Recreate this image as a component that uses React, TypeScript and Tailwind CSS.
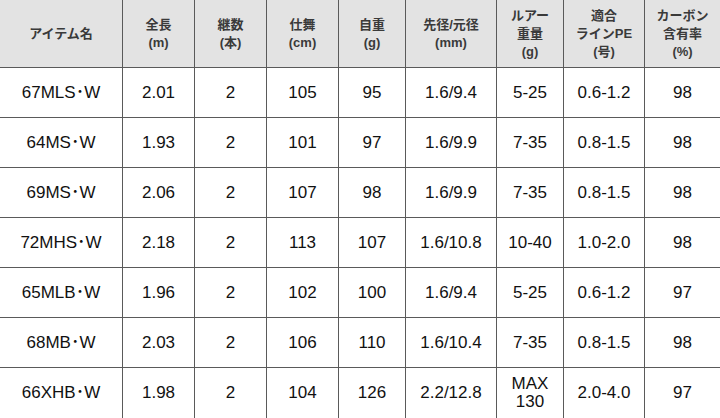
import React from 'react';

const headers: string[][] = [
  ['アイテム名'],
  ['全長', '(m)'],
  ['継数', '(本)'],
  ['仕舞', '(cm)'],
  ['自重', '(g)'],
  ['先径/元径', '(mm)'],
  ['ルアー', '重量', '(g)'],
  ['適合', 'ラインPE', '(号)'],
  ['カーボン', '含有率', '(%)'],
];

const rows: string[][] = [
  ['67MLS･W', '2.01', '2', '105', '95', '1.6/9.4', '5-25', '0.6-1.2', '98'],
  ['64MS･W', '1.93', '2', '101', '97', '1.6/9.9', '7-35', '0.8-1.5', '98'],
  ['69MS･W', '2.06', '2', '107', '98', '1.6/9.9', '7-35', '0.8-1.5', '98'],
  ['72MHS･W', '2.18', '2', '113', '107', '1.6/10.8', '10-40', '1.0-2.0', '98'],
  ['65MLB･W', '1.96', '2', '102', '100', '1.6/9.4', '5-25', '0.6-1.2', '97'],
  ['68MB･W', '2.03', '2', '106', '110', '1.6/10.4', '7-35', '0.8-1.5', '98'],
  ['66XHB･W', '1.98', '2', '104', '126', '2.2/12.8', 'MAX\n130', '2.0-4.0', '97'],
];

const font = { fontFamily: '"Liberation Sans", Arial, "Noto Sans CJK JP", sans-serif' };

export default function App() {
  return (
    <div className="w-[720px] h-[418px] overflow-hidden bg-white" style={font}>
      <div className="grid grid-cols-[123px_72px_72px_72px_67px_91px_67px_81px_75px]">
        {headers.map((lines, i) => (
          <div
            key={i}
            className={`h-[68px] flex flex-col items-center justify-center bg-[#e3e3e3] border-b border-[#5a5a5a] text-[13px] leading-[18px] font-bold text-[#3a3a3a] ${
              i < 8 ? 'border-r' : ''
            }`}
          >
            {lines.map((l) => (
              <span key={l}>{l}</span>
            ))}
          </div>
        ))}
        {rows.map((row, r) =>
          row.map((cell, i) => (
            <div
              key={`${r}-${i}`}
              className={`flex flex-col items-center justify-center border-b border-[#5a5a5a] text-[17px] leading-[18px] text-[#111] ${
                i < 8 ? 'border-r' : ''
              } ${i === 0 ? 'text-[16px]' : ''} ${r === 6 ? 'h-[52px] pb-[2px]' : 'h-[50px]'}`}
            >
              {cell.split('\n').map((l) => (
                <span key={l}>{l}</span>
              ))}
            </div>
          ))
        )}
      </div>
    </div>
  );
}
